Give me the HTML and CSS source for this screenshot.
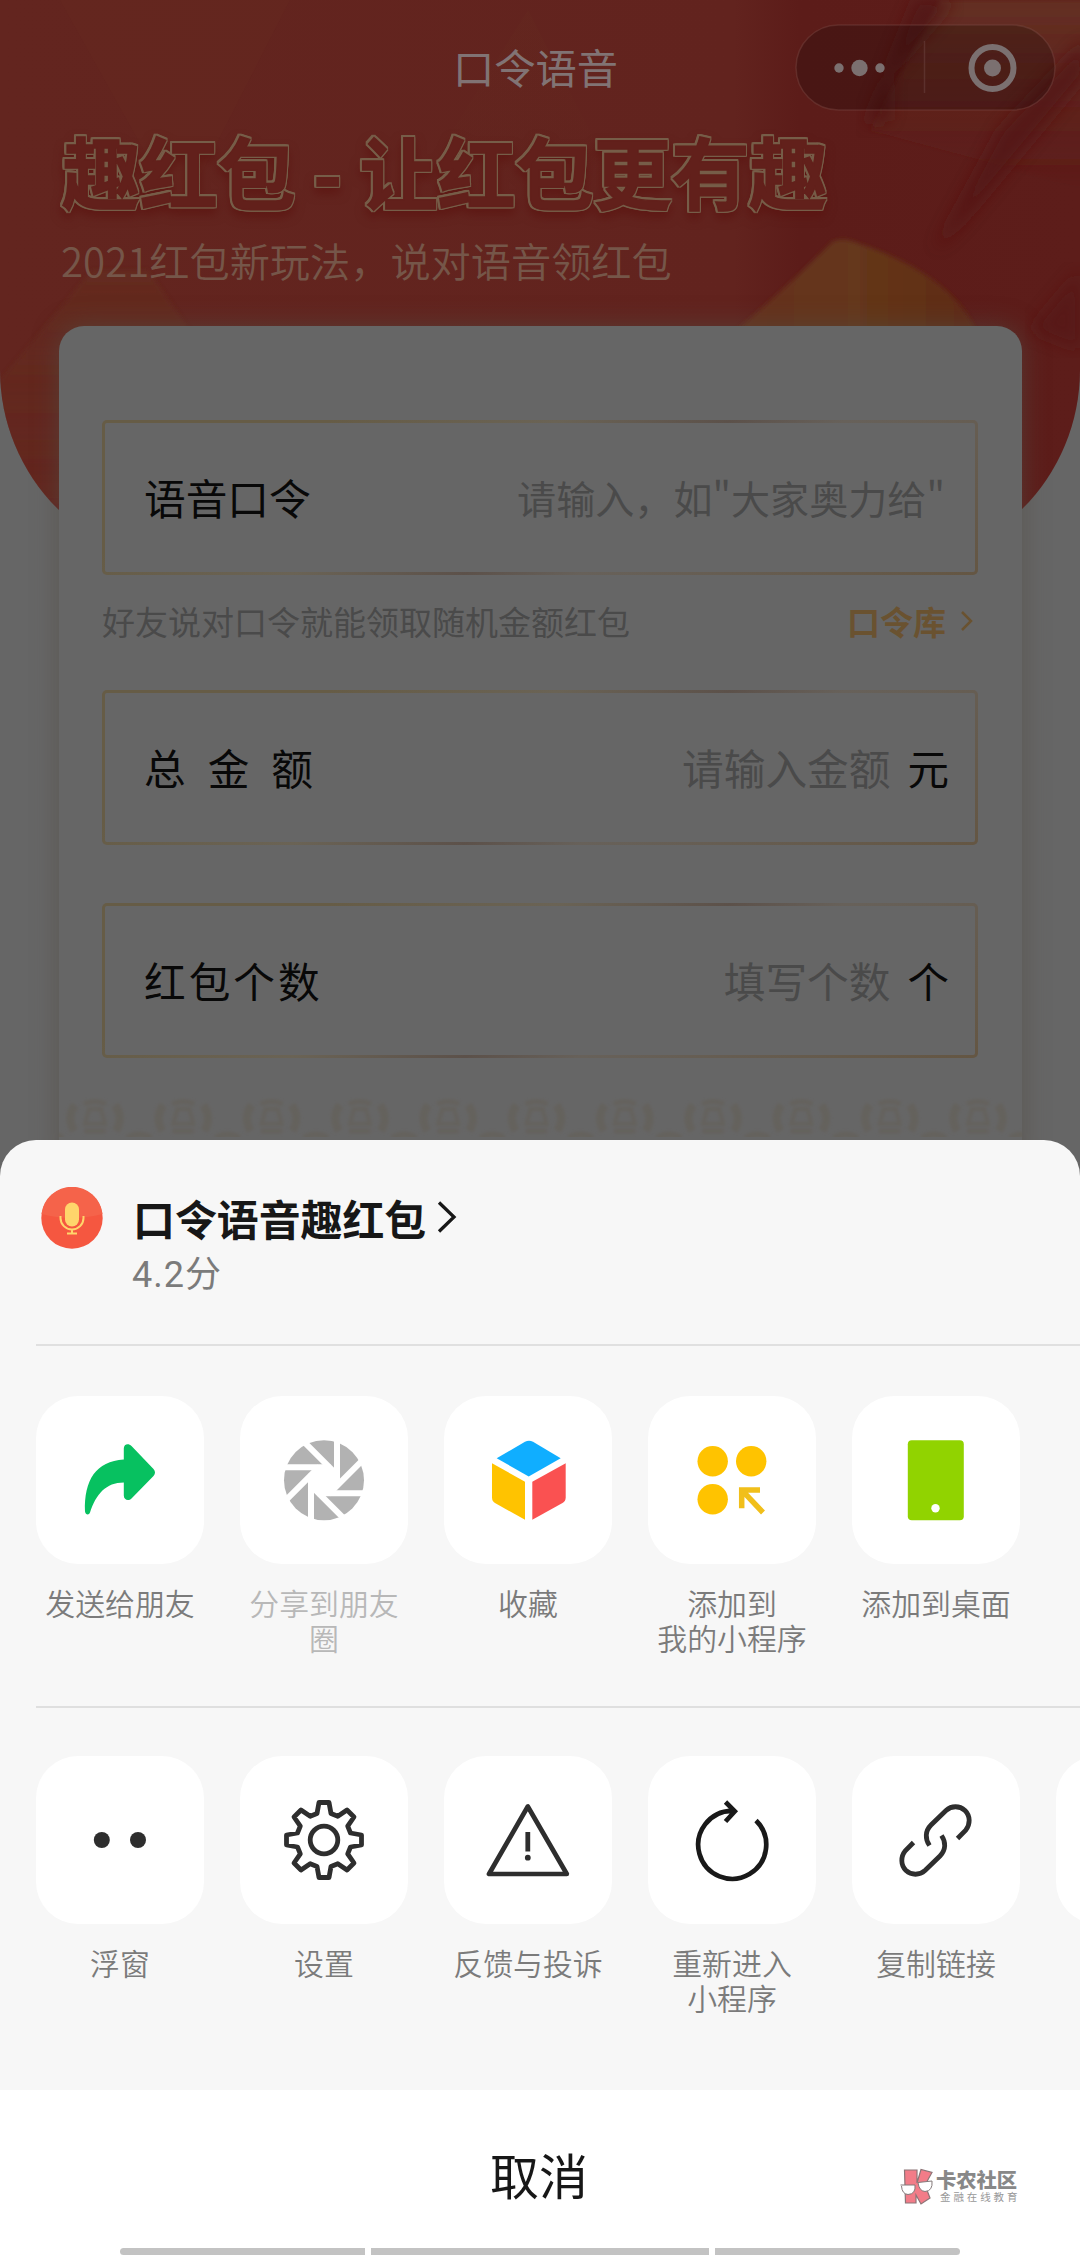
FILE: index.html
```
<!DOCTYPE html>
<html lang="zh-CN">
<head>
<meta charset="utf-8">
<title>口令语音</title>
<link rel="stylesheet" href="styles.css">
</head>
<body>
<main class="screen">
  <section class="app">
    <div class="hero">
      <svg width="1080" height="566" viewBox="0 0 1080 566">
        <defs>
          <linearGradient id="base" x1="0" x2="1" y1="0" y2="0">
            <stop offset="0" stop-color="#63251f"/><stop offset=".68" stop-color="#62231e"/><stop offset=".74" stop-color="#5c1c19"/><stop offset="1" stop-color="#5d1d1a"/>
          </linearGradient>
          <linearGradient id="tan" x1="0" x2="0" y1="0" y2="1">
            <stop offset="0" stop-color="#652e20"/><stop offset="1" stop-color="#652e20" stop-opacity="0"/>
          </linearGradient>
          <linearGradient id="corner" x1="0" x2="0" y1="0" y2="1">
            <stop offset="0" stop-color="#643023"/><stop offset="1" stop-color="#5f211c" stop-opacity="0"/>
          </linearGradient>
          <linearGradient id="gold" x1="0" x2="1" y1="0" y2="0">
            <stop offset="0" stop-color="#66301c"/><stop offset=".5" stop-color="#65371a"/><stop offset="1" stop-color="#5f2a17"/>
          </linearGradient>
          <filter id="soft"><feGaussianBlur stdDeviation="8"/></filter>
          <filter id="edge"><feGaussianBlur stdDeviation="2"/></filter>
        </defs>
        <rect width="1080" height="566" fill="url(#base)"/>
        <path d="M60 0H290L180 215Z" fill="#672a22" opacity=".3"/>
        <path d="M528 10L620 190H415Z" fill="url(#tan)" opacity=".2"/>
        <path d="M940 0H1090V190L870 130Z" fill="url(#corner)" filter="url(#edge)"/>
        <path d="M915 0H955L890 75V120L865 125Z" fill="#501512" opacity=".7" filter="url(#soft)"/>
        <path d="M1085 40L1000 130L935 250L960 225L1085 75Z" fill="#521513" opacity=".8" filter="url(#soft)"/>
        <path d="M1080 270L1030 330L1080 350Z" fill="#551715" opacity=".6" filter="url(#soft)"/>
        <path d="M0 380L92 270H148L200 345V566H0Z" fill="url(#tan)" opacity=".7" filter="url(#edge)"/>
        <path d="M732 334Q790 285 832 242Q842 236 860 244Q952 275 978 334Z" fill="url(#gold)" filter="url(#edge)"/>
      </svg>
    </div>

    <header class="nav">
      <h1 class="nav-title">口令语音</h1>
      <div class="capsule">
        <svg width="261" height="87" viewBox="0 0 261 87">
          <rect x="1" y="1" width="259" height="85" rx="42.5" fill="#000" fill-opacity=".2" stroke="#7a4a46" stroke-opacity=".4" stroke-width="1.5"/>
          <path d="M129.500 17V69" stroke="#7a5753" stroke-opacity=".35" stroke-width="1.5"/>
          <g fill="#7b7070"><circle cx="44" cy="44" r="4.700"/><circle cx="64.500" cy="44" r="8.200"/><circle cx="85" cy="44" r="4.700"/><circle cx="197.500" cy="44" r="8.500"/></g>
          <circle cx="197.500" cy="44" r="21" fill="none" stroke="#7b7070" stroke-width="6"/>
        </svg>
      </div>
    </header>

    <h2 class="headline">趣红包 - 让红包更有趣</h2>
    <p class="tagline">2021红包新玩法，说对语音领红包</p>

    <div class="card">
      <div class="field"><span class="label">语音口令</span><span class="hint-text hint-phrase">请输入，如"大家奥力给"</span></div>
      <div class="note"><span>好友说对口令就能领取随机金额红包</span>
        <a class="library">口令库<svg width="14" height="22" viewBox="0 0 14 22"><path d="M2 2L11 11L2 20" fill="none" stroke="#6a5230" stroke-width="2.500"/></svg></a></div>
      <div class="field"><span class="label spread">总金额</span><span class="hint-text">请输入金额</span><span class="unit">元</span></div>
      <div class="field field-count"><span class="label count">红包个数</span><span class="hint-text">填写个数</span><span class="unit">个</span></div>
      <svg class="coins" width="963" height="44" viewBox="0 0 963 44">
        <defs>
          <filter id="haze"><feGaussianBlur stdDeviation="1.600"/></filter>
          <pattern id="coin" width="88.300" height="44" patternUnits="userSpaceOnUse" x="-8">
            <g fill="none" stroke="#645f57" filter="url(#haze)">
              <path d="M24 12Q15 24 23 38M64 12Q73 24 65 38" stroke-width="8"/>
              <path d="M33 11Q44 6 55 11M33 38H55" stroke-width="5"/>
              <path d="M38 16H50L54 31H34Z" stroke-width="4"/>
              <path d="M-12 45Q0 38 12 45M76 45Q88 38 100 45" stroke-width="6"/>
            </g>
          </pattern>
        </defs>
        <rect width="963" height="44" fill="url(#coin)" opacity=".6"/>
      </svg>
    </div>
  </section>

  <section class="sheet">
    <div class="profile">
      <svg class="avatar" width="62" height="62" viewBox="0 0 62 62">
        <circle cx="31" cy="31" r="30.700" fill="#f55740"/>
        <path d="M.5 27A30.700 30.700 0 0 1 61.500 27Q31 35 .5 27Z" fill="#f5634a"/>
        <rect x="24" y="15.500" width="14" height="24" rx="7" fill="#ffd56b"/>
        <path d="M19.500 29V31A11.500 11.500 0 0 0 42.500 31V29M31 42V46M26 46.500H36" fill="none" stroke="#ffd56b" stroke-width="2"/>
      </svg>
      <div class="profile-text">
        <div class="name">口令语音趣红包<svg width="20" height="32" viewBox="0 0 20 32"><path d="M2 1.500L17 16L2 30.500" fill="none" stroke="#171717" stroke-width="3.300"/></svg></div>
        <div class="score">4.2分</div>
      </div>
    </div>

    <div class="actions">
      <div class="action"><div class="tile"><svg viewBox="0 0 168 168"><path d="M87.800 63.400V52.500C87.800 48 92.500 47 95.500 50L117.500 73C119.500 75.500 119.500 77.500 117.500 80L95.500 102.500C92.500 105.500 87.800 104 87.800 99.500V86.400C70 86.400 60 98 54 116.500C53 119.500 49.500 119 49 115.500C48 84 60 65 87.800 63.400Z" fill="#07c160"/></svg></div><span>发送给朋友</span></div>
      <div class="action disabled"><div class="tile"><svg viewBox="0 0 168 168">
        <g transform="translate(84 84.300)"><circle r="40" fill="#b2b2b2"/><path d="M13-5.400V5.400L5.400 13H-5.400L-13 5.400V-5.400L-5.400-13H5.400Z" fill="#fff"/>
        <g stroke="#fff" stroke-width="6"><path d="M13-42V6.500"/><path d="M13-42V6.500" transform="rotate(45)"/><path d="M13-42V6.500" transform="rotate(90)"/><path d="M13-42V6.500" transform="rotate(135)"/><path d="M13-42V6.500" transform="rotate(180)"/><path d="M13-42V6.500" transform="rotate(225)"/><path d="M13-42V6.500" transform="rotate(270)"/><path d="M13-42V6.500" transform="rotate(315)"/></g></g></svg></div><span>分享到朋友<br>圈</span></div>
      <div class="action"><div class="tile"><svg viewBox="0 0 168 168"><path d="M52.700 62.200L81 45.800Q85 43.500 89 45.800L116.700 62.200L84.700 80.500Z" fill="#10aeff"/><path d="M48 67.200L81 85.800V123.800L51 107Q48 105 48 101.500Z" fill="#ffc300"/><path d="M121.700 67.200L88.300 85.800V123.800L118.500 107Q121.700 105 121.700 101.500Z" fill="#fa5151"/></svg></div><span>收藏</span></div>
      <div class="action"><div class="tile"><svg viewBox="0 0 168 168"><g fill="#ffc300"><circle cx="64.700" cy="65.300" r="15.200"/><circle cx="103.200" cy="65.300" r="15.200"/><circle cx="64.700" cy="103.300" r="15.200"/></g><path d="M93.700 112.300V94H112M94.500 94.800L115 116.500" fill="none" stroke="#f1bf1a" stroke-width="5.500"/></svg></div><span>添加到<br>我的小程序</span></div>
      <div class="action"><div class="tile"><svg viewBox="0 0 168 168"><rect x="55.800" y="44.300" width="56" height="80" rx="4" fill="#91d300"/><circle cx="83.500" cy="112.300" r="4.200" fill="#fff"/></svg></div><span>添加到桌面</span></div>
    </div>

    <div class="actions actions-more">
      <div class="action"><div class="tile"><svg viewBox="0 0 168 168" fill="#2e2e2e"><circle cx="65.800" cy="84" r="8"/><circle cx="102" cy="84" r="8"/></svg></div><span>浮窗</span></div>
      <div class="action"><div class="tile"><svg viewBox="0 0 168 168"><g transform="translate(84 84)" fill="none" stroke="#2e2e2e" stroke-width="4.800" stroke-linejoin="round"><circle r="13.800"/><path d="M-7-26.500L-5-37.500H5L7-26.500L13.800-23.700L23-30L30-23L23.700-13.800L26.500-7L37.500-5V5L26.500 7L23.700 13.800L30 23L23 30L13.800 23.700L7 26.500L5 37.500H-5L-7 26.500L-13.800 23.700L-23 30L-30 23L-23.700 13.800L-26.500 7L-37.500 5V-5L-26.500-7L-23.700-13.800L-30-23L-23-30L-13.800-23.700Z"/></g></svg></div><span>设置</span></div>
      <div class="action"><div class="tile"><svg viewBox="0 0 168 168"><path d="M83.800 50.500L45 118H122.800Z" fill="none" stroke="#2e2e2e" stroke-width="4.700" stroke-linejoin="round"/><path d="M83.800 76V95.500" stroke="#2e2e2e" stroke-width="4.800"/><circle cx="83.800" cy="101.700" r="2.900" fill="#2e2e2e"/></svg></div><span>反馈与投诉</span></div>
      <div class="action"><div class="tile"><svg viewBox="0 0 168 168" fill="none" stroke="#191919" stroke-width="4.700"><path d="M108 64.500A34 34 0 1 1 84 54.800H87M77.500 46L86.800 55.300L77.500 65.500"/></svg></div><span>重新进入<br>小程序</span></div>
      <div class="action"><div class="tile"><svg viewBox="0 0 168 168" fill="none" stroke="#2e2e2e" stroke-width="4.800"><path d="M77.500 89.500C73 83 73 75 79 69L94 54.500C99.500 49.500 107.500 49.500 113 54.500C118.500 60 118.500 68.500 113.500 74.500L105.500 82.500"/><path d="M89.500 79.500C94 86 94 94 88 100L73 114.500C67.500 119.500 59.500 119.500 54 114.500C48.500 109 48.500 100.500 53.500 94.500L61.500 86.500"/></svg></div><span>复制链接</span></div>
      <div class="action"><div class="tile"></div></div>
    </div>

    <footer class="cancel">
      <span class="cancel-text">取消</span>
      <div class="brand">
        <svg width="36" height="38" viewBox="0 0 36 38"><path d="M5.500 2H18V15L22 1.500L33 4.500L26 17L31 30L22 36L17 27V35H6.500Z" fill="#f27c88" stroke="#8c7577" stroke-width="1.200"/><g fill="#fff" stroke="#84797a" stroke-width="1"><path d="M1.500 17H16Q17 26 9 26.500Q3 26 2.500 18"/><path d="M19 14.500L33 13Q34 23 26 23.500Q20 23 19 14.500Z"/></g></svg>
        <div class="brand-text"><b>卡农社区</b><small>金融在线教育</small></div>
      </div>
      <div class="gesture"><i></i><i></i><i></i></div>
    </footer>
  </section>
</main>
</body>
</html>
```
FILE: styles.css
```
* { box-sizing: border-box; margin: 0; padding: 0; }
body { background: #666; font-family: "Noto Sans CJK SC", sans-serif; }
svg { display: block; flex: none; }
.screen { position: relative; width: 1080px; height: 2256px; overflow: hidden; background: #666; }

/* dimmed mini-program page behind the sheet */
.app { position: relative; height: 1160px; overflow: hidden; }
.hero { position: absolute; inset: 0 0 auto; height: 566px; overflow: hidden; border-radius: 0 0 196px 196px; }
.nav { position: relative; display: grid; grid-template-columns: 1fr auto 1fr; align-items: center; height: 134px; }
.nav-title { grid-column: 2; margin: 0 9px 2px 0; font-size: 41.300px; font-weight: 400; line-height: 60px; color: #817374; }
.capsule { justify-self: end; margin-right: 24px; }
.headline { position: relative; margin: -6px 0 0 62px; height: 84px; line-height: 84px; font-size: 77.900px; font-weight: 700; white-space: pre; color: #62201b; -webkit-text-stroke: 1.500px #62201b; filter: drop-shadow(1.500px 0 #765d48) drop-shadow(-1.500px 0 #765d48) drop-shadow(0 1.500px #765d48) drop-shadow(0 -1.500px #765d48) drop-shadow(0 6px 5px rgba(90, 16, 14, .6)); }
.tagline { position: relative; margin: 18px 0 0 61px; height: 60px; line-height: 60px; font-size: 40.200px; font-weight: 350; color: #755649; }
.card { position: relative; display: flex; flex-direction: column; margin: 36px 58px 0 59px; height: 850px; padding: 94px 44px 0 43px; border-radius: 25px; background: #666; box-shadow: 0 0 26px rgba(84, 76, 68, .6); }
.field { display: flex; align-items: center; height: 155px; padding: 0 30px 2px 39px; border: 3px solid transparent; border-radius: 5px; background: linear-gradient(#666, #666) padding-box, linear-gradient(150deg, #665c46 0 20%, #6a6355 40%, #5c514a 55%, #67615a 65%, #645643 100%) border-box; }
.label { flex: 1; font-size: 41.700px; color: #080808; }
.spread { letter-spacing: 22px; }
.count { letter-spacing: 3px; }
.hint-text { font-size: 41.700px; color: #4a4a4a; font-weight: 400; }
.hint-phrase { font-size: 39.100px; }
.unit { margin-left: 17px; margin-right: -4px; font-size: 41.500px; color: #080808; }
.note { display: flex; justify-content: space-between; align-items: center; height: 96px; margin-bottom: 19px; padding-bottom: 4px; font-size: 33px; color: #4a4a4a; font-weight: 400; }
.library { display: flex; align-items: center; gap: 14px; padding-right: 4px; color: #6a5230; font-weight: 700; }
.field-count { margin-top: 58px; }
.coins { margin: 35px 0 0 -43px; }

/* action sheet */
.sheet { position: absolute; inset: 1140px 0 0; display: flex; flex-direction: column; border-radius: 36px 36px 0 0; background: #f7f7f7; overflow: hidden; }
.profile { display: flex; height: 206px; margin-left: 36px; padding: 47px 0 0 5px; border-bottom: 2px solid #e0e0e0; }
.profile-text { margin: -3px 0 0 30px; }
.name { display: flex; align-items: center; gap: 11px; height: 66px; font-size: 41.900px; font-weight: 700; color: #171717; }
.score { height: 44px; margin: 3px 0 0 -1px; font: 400 36px/44px Roboto, "Noto Sans CJK SC", sans-serif; letter-spacing: 1px; color: #7b7b7b; }
.actions { display: grid; grid-template-columns: repeat(6, 168px); column-gap: 36px; height: 362px; margin-left: 36px; padding-top: 50px; border-bottom: 2px solid #dfdfdf; }
.actions-more { height: 382px; padding-top: 48px; border: 0; }
.action { text-align: center; font-size: 29.900px; line-height: 35px; color: #7b7b7b; font-weight: 350; }
.action span { display: block; margin-top: 21px; }
.disabled { color: #b8b8b8; }
.tile { width: 168px; height: 168px; border-radius: 42px; background: #fff; }
.cancel { position: relative; flex: 1; background: #fff; text-align: center; }
.cancel-text { display: block; padding: 48px 2px 0 0; font-size: 49px; line-height: 72px; color: #171717; }
.brand { position: absolute; left: 899px; top: 78px; display: flex; }
.brand-text { display: flex; flex-direction: column; margin-left: 1px; text-align: left; }
.brand b { font-size: 20.300px; font-weight: 900; line-height: 23px; color: #888; }
.brand small { margin-left: 4px; font-size: 10.500px; line-height: 12px; letter-spacing: 2.900px; color: #999; white-space: nowrap; }
.gesture { position: absolute; left: 120px; bottom: 1px; display: grid; grid-template-columns: 245px 338px 245px; gap: 6px; height: 7px; }
.gesture i { background: #c3c3c3; }
.gesture i:first-child { border-radius: 4px 0 0 4px; }
.gesture i:last-child { border-radius: 0 4px 4px 0; }
```
